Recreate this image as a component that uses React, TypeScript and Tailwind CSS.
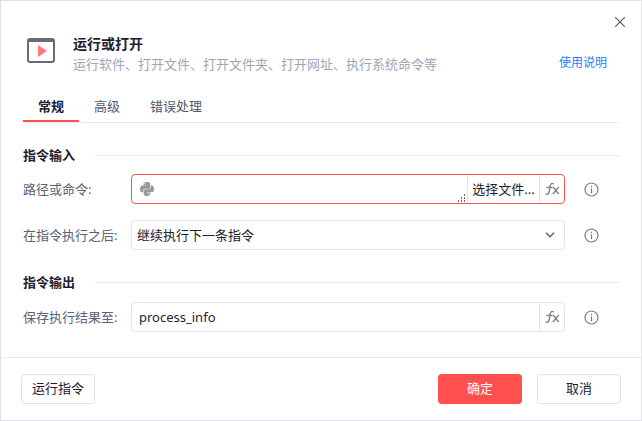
import { useState } from "react";
import type { ReactNode } from "react";
import clsx from "clsx";
import { FaPython } from "react-icons/fa";

const tabs = ["常规", "高级", "错误处理"];

const AppIcon = () => (
  <svg width="28" height="25" viewBox="0 0 28 25" className="mt-1 shrink-0" aria-hidden="true">
    <rect x="1" y="1" width="26" height="23" rx="2" fill="#fff" stroke="#6b6b75" strokeWidth="2" />
    <path d="M1 1h26v3H1z" fill="#6b6b75" />
    <path d="M11 7l9 6-9 6z" fill="#ff7a7a" />
  </svg>
);

const InfoIcon = () => (
  <svg width="15" height="15" viewBox="0 0 15 15" fill="none" className="shrink-0" aria-hidden="true">
    <circle cx="7.5" cy="7.5" r="6.5" stroke="#7b7b85" strokeWidth="1.2" />
    <path d="M7.5 6.2v5" stroke="#7b7b85" strokeWidth="1.2" />
    <path d="M7.5 3.8v1.3" stroke="#7b7b85" strokeWidth="1.2" />
  </svg>
);

const FxIcon = () => (
  <svg width="16" height="14" viewBox="0 0 16 14" fill="none" stroke="#858585" strokeWidth="1.4" aria-hidden="true">
    <path d="M9.8 2C8 1 6.6 1.4 6.2 3.6L5.1 10c-.4 2-1.6 2.6-3.5 1.9" />
    <path d="M2.4 5.5h6" />
    <path d="M9.2 5l5.4 7M14.8 5l-6 7" />
  </svg>
);

const GripIcon = () => (
  <svg
    width="8"
    height="8"
    viewBox="0 0 8 8"
    fill="#6b6b72"
    className="pointer-events-none absolute right-px bottom-px"
    shapeRendering="crispEdges"
    aria-hidden="true"
  >
    <path d="M6 0h1v2H6zM3 3h1v2H3zM6 3h1v2H6zM0 6h1v2H0zM3 6h1v2H3zM6 6h1v2H6z" />
  </svg>
);

const FxButton = () => (
  <button
    type="button"
    aria-label="fx"
    className="flex w-[25px] shrink-0 items-center justify-center border-l border-[#e4e4ea]"
  >
    <FxIcon />
  </button>
);

const SectionTitle = ({ children }: { children: ReactNode }) => (
  <div className="flex items-center gap-5">
    <h2 className="text-[13px] leading-5 font-bold">{children}</h2>
    <div className="h-px flex-1 bg-[repeating-linear-gradient(to_right,#e6e6ea_0_6px,transparent_6px_8px)]" />
  </div>
);

type FieldProps = {
  id: string;
  label: string;
  error?: boolean;
  children: ReactNode;
};

const Field = ({ id, label, error, children }: FieldProps) => (
  <div className="flex items-center pr-5">
    <label htmlFor={id} className="w-[108px] shrink-0 text-[#5a6375]">
      {label}
    </label>
    <div
      className={clsx(
        "flex h-[30px] min-w-0 flex-1 overflow-hidden rounded border bg-white",
        error ? "border-[#f9524f]" : "border-[#e4e4ea]"
      )}
    >
      {children}
    </div>
    <button type="button" aria-label="说明" className="ml-[19px]">
      <InfoIcon />
    </button>
  </div>
);

const App = () => {
  const [active, setActive] = useState(0);
  const [path, setPath] = useState("");
  const [result, setResult] = useState("process_info");

  return (
    <div
      role="dialog"
      aria-labelledby="title"
      className="relative border border-[#e1e1e8] bg-white font-['Noto_Sans','Noto_Sans_CJK_SC',sans-serif] text-[13px] leading-5 text-[#1b2130]"
    >
      <button type="button" aria-label="关闭" className="absolute top-4 right-4">
        <svg width="10" height="10" viewBox="0 0 10 10" stroke="#555" strokeWidth="1.1" aria-hidden="true">
          <path d="M0 0l10 10M10 0L0 10" />
        </svg>
      </button>

      <header className="flex items-start pt-[33px] pr-[34px] pl-[26px]">
        <AppIcon />
        <div className="ml-[18px] flex-1">
          <h1 id="title" className="text-sm leading-5 font-bold">
            运行或打开
          </h1>
          <p className="text-[#9ea5b8]">运行软件、打开文件、打开文件夹、打开网址、执行系统命令等</p>
        </div>
        <a href="#help" className="mt-[19px] text-xs leading-5 text-[#1b80ff]">
          使用说明
        </a>
      </header>

      <nav role="tablist" className="mx-[22px] mt-5 flex border-b border-[#ebebef]">
        {tabs.map((tab, i) => (
          <button
            key={tab}
            type="button"
            role="tab"
            aria-selected={i === active}
            onClick={() => setActive(i)}
            className={clsx(
              "border-b-2 px-[15px] pt-0.5 pb-1",
              i === active ? "border-[#ff4f4f] font-bold" : "border-transparent text-[#4f586b]"
            )}
          >
            {tab}
          </button>
        ))}
      </nav>

      <main className="px-[22px] pt-[22px] pb-[25px]">
        <SectionTitle>指令输入</SectionTitle>
        <div className="mt-[9px] mb-[22px] flex flex-col gap-4">
          <Field id="path" label="路径或命令:" error>
            <div className="relative flex min-w-0 flex-1 items-center pl-[7px]">
              <FaPython size={16} color="#999" className="shrink-0" />
              <textarea
                id="path"
                rows={1}
                value={path}
                onChange={(e) => setPath(e.target.value)}
                className="h-5 min-w-0 flex-1 resize-none overflow-hidden px-2 outline-none"
              />
              <GripIcon />
            </div>
            <button type="button" className="w-[72px] shrink-0 border-l border-[#e4e4ea] whitespace-nowrap">
              选择文件...
            </button>
            <FxButton />
          </Field>
          <Field id="after" label="在指令执行之后:">
            <div className="relative flex flex-1">
              <select id="after" className="flex-1 appearance-none bg-transparent pr-8 pl-[5px] outline-none">
                <option>继续执行下一条指令</option>
              </select>
              <svg
                width="10"
                height="6"
                viewBox="0 0 10 6"
                fill="none"
                stroke="#555c6b"
                strokeWidth="1.3"
                className="pointer-events-none absolute top-[11px] right-[9px]"
                aria-hidden="true"
              >
                <path d="M1 .8l4 4 4-4" />
              </svg>
            </div>
          </Field>
        </div>

        <SectionTitle>指令输出</SectionTitle>
        <div className="mt-2.5">
          <Field id="result" label="保存执行结果至:">
            <input
              id="result"
              type="text"
              value={result}
              onChange={(e) => setResult(e.target.value)}
              className="min-w-0 flex-1 px-[7px] text-[13px] outline-none"
            />
            <FxButton />
          </Field>
        </div>
      </main>

      <footer className="flex gap-[15px] border-t border-[#ebebef] px-5 py-4">
        <button type="button" className="mr-auto h-[30px] w-[74px] rounded border border-[#e1e1e8] pb-0.5">
          运行指令
        </button>
        <button type="button" className="h-[30px] w-[84px] rounded bg-[#ff4f4f] pb-0.5 text-white">
          确定
        </button>
        <button type="button" className="h-[30px] w-[84px] rounded border border-[#e1e1e8] pb-0.5">
          取消
        </button>
      </footer>
    </div>
  );
};

export default App;
